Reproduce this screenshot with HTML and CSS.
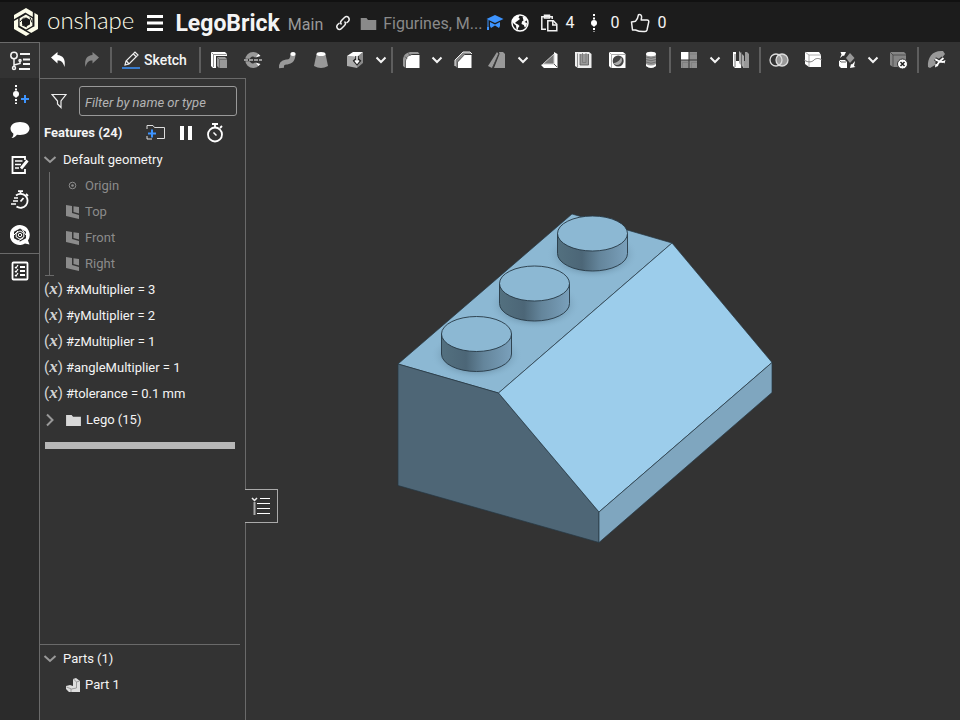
FILE: index.html
```html
<!DOCTYPE html>
<html lang="en">
<head>
<meta charset="utf-8">
<title>LegoBrick | Main</title>
<link rel="stylesheet" href="styles.css">
</head>
<body>
<svg class="defs" aria-hidden="true">
  <symbol id="chevron" viewBox="0 0 12 12"><path d="M1.500 3.500l4.500 4.500 4.500-4.500" fill="none" stroke="currentColor" stroke-width="2"/></symbol>
  <symbol id="plane" viewBox="0 0 14 14"><path d="M0 0l6 1v7l7 2v4L0 11z"/><path d="M7.500 1.200l5.500.8v6.500L7.500 7z"/></symbol>
  <symbol id="folder" viewBox="0 0 16 14"><path d="M0 1h6l1.500 2H16v10H0z"/></symbol>
</svg>

<header class="topbar">
  <a class="brand" href="#" aria-label="onshape home">
    <svg width="24" height="28" viewBox="0 0 24 28">
      <path d="M12 0L24 7v14L12 28 0 21V7z" fill="#fdfdea"/>
      <path d="M12 5l7.800 4.500v9L12 23l-7.800-4.500v-9z" fill="#1c1c1c"/>
      <g stroke="#1c1c1c" stroke-width="1.600"><path id="slit" d="M12 5.200L-1 12.700"/><use href="#slit" transform="rotate(120 12 14)"/><use href="#slit" transform="rotate(240 12 14)"/></g>
      <path d="M12 8l5.200 3v6L12 20l-5.200-3v-6z" fill="none" stroke="#fdfdea" stroke-width="2.400"/>
      <path d="M6 14l4-4.500M16 9.500l2 5M13 19l-5-2" stroke="#1c1c1c"/>
    </svg>
    <span>onshape</span>
  </a>
  <button class="menu" type="button" aria-label="Menu"><svg width="16" height="16" viewBox="0 0 16 16"><path d="M0 1.500h16M0 8h16M0 14.500h16" stroke="#fff" stroke-width="3"/></svg></button>
  <h1>LegoBrick</h1>
  <span class="workspace">Main</span>
  <button class="share" type="button" aria-label="Copy link"><svg width="16" height="16" viewBox="0 0 16 16" fill="none" stroke="#eee" stroke-width="1.500"><path d="M6.500 9.500C5 8 5.500 6.500 6.500 5.500l3-3c1.300-1.300 3-1.300 4 0s1 2.500 0 3.700L11.500 8"/><path d="M9.500 6.500c1.500 1.500 1 3 0 4l-3 3c-1.300 1.300-3 1.300-4 0s-1-2.500 0-3.700L4.500 8"/></svg></button>
  <a class="location" href="#"><svg width="17" height="14" viewBox="0 0 16 14" fill="#8a8a8a"><use href="#folder"/></svg>Figurines, M...</a>
  <svg class="edu" width="18" height="16" viewBox="0 0 18 16" fill="#3d94ff"><path d="M9 0l8.500 4L9 8 .5 4zM4 7l5 2.400L14 7v4l-1 2-4-2.500L5 13l-1-2z"/><path d="M2 5v8" stroke="#3d94ff"/><path d="M1 15v-3h2v3z"/></svg>
  <svg class="globe" width="18" height="18" viewBox="0 0 18 18"><circle cx="9" cy="9" r="8" fill="none" stroke="#fff" stroke-width="1.500"/><path d="M2 4.500L6 1.500l2.500.5-1 1.500L9 5 7 6.500 5 8 4 9l3 1.500 1.500 1.500L7 14v2l-1.500-1L5 11.500 2.500 9.500 1 7zM11.500 2.500L14 3l2.300 3-1.300 1-1.500 1L16 9l-.5 3-1.700 1.500-1-2.500-2.300-1 .5-2.500 1.500-1-.5-2z" fill="#fff"/></svg>
  <button class="stat" type="button" aria-label="Copies"><svg width="18" height="18" viewBox="0 0 18 18" fill="none" stroke="#f2f2f2" stroke-width="1.500"><path d="M6 15.200H1.800V2.800h10.400V5"/><path d="M4.500 4V1.200h5V4z"/><path d="M7.800 6.800h5.500l3.500 3.500v6.500h-9z"/><path d="M12.800 7v4h4"/></svg>4</button>
  <button class="stat" type="button" aria-label="Versions"><svg width="18" height="18" viewBox="0 0 18 18"><path d="M9 0v18" stroke="#fff" stroke-width="2" stroke-dasharray="2 1.500"/><circle cx="9" cy="9" r="3" fill="#fff"/></svg>0</button>
  <button class="stat" type="button" aria-label="Likes"><svg width="20" height="20" viewBox="0 0 20 20" fill="none" stroke="#f2f2f2" stroke-width="1.500" stroke-linejoin="round"><path d="M1.500 9l4-.8c2-1.800 2.500-3.200 3-6.500 2-.8 3.300.8 3.100 2.500L11.200 7H17c1.500 0 2 1 1.700 2.200L17 17c-.3 1-.8 1.500-2 1.500-4 .3-7-.3-9.500-1.500H2.500z"/></svg>0</button>
</header>

<div class="workarea">
  <nav class="rail" aria-label="Side panels">
    <button class="active" type="button" aria-label="Feature list"><svg width="22" height="20" viewBox="0 0 22 20" fill="none" stroke="#f4f4f4" stroke-width="1.500"><circle cx="5" cy="4.500" r="3.200"/><path d="M5 8v8M5 14l6-1.500V10"/><circle cx="5" cy="17" r="1.500"/><circle cx="11" cy="9.500" r="1"/><path d="M11 3h10M14 8.500h7M14 13h7M10 18h11" stroke-width="2"/></svg></button>
    <button type="button" aria-label="Versions and history"><svg width="20" height="20" viewBox="0 0 20 20"><path d="M6 0v19" stroke="#fff" stroke-width="2" stroke-dasharray="2 1.500"/><circle cx="6" cy="9" r="3" fill="#fff"/><path d="M11 14h8M15 10v8" stroke="#3d94ff" stroke-width="2"/></svg></button>
    <button type="button" aria-label="Comments"><svg width="20" height="18" viewBox="0 0 20 18"><path d="M10 1c5.500 0 9.500 2.800 9.500 6.500S15.500 14 10 14l-3-.3C5.500 15.500 4 17 1.500 17c1.500-1.300 2-2.500 1.800-4.500C1.500 11.300.5 9.500.5 7.500.5 3.800 4.500 1 10 1z" fill="#fff"/></svg></button>
    <button type="button" aria-label="Notes"><svg width="18" height="20" viewBox="0 0 18 20" fill="none" stroke="#fff" stroke-width="1.800"><path d="M14 5V2H1.500v16H14v-4"/><path d="M4 6h7.500M4 9.500h6M4 13h4" stroke-width="1.500"/><path d="M16.500 5.500l-6.500 8" stroke-width="2.800"/></svg></button>
    <button type="button" aria-label="Performance"><svg width="20" height="20" viewBox="0 0 20 20" fill="none" stroke="#fff" stroke-width="1.800"><path d="M6 5.500a7 7 0 1 1 .5 11"/><path d="M8 1.200h5M10.500 1v3M16 4l2 2M10.500 11.500l3-3.500"/><path d="M4 8h4M3 11h5M1 14h5" stroke-width="1.300"/></svg></button>
    <button type="button" aria-label="Help"><svg width="20" height="20" viewBox="0 0 20 20"><path d="M10 0a10 10 0 0 1 8 15.500l1.500 4-4.500-1A10 10 0 1 1 10 0z" fill="#fff"/><path d="M10 3.500l6 3.300v6.500l-6 3.300-6-3.300V6.800z" fill="#2b2b2b"/><path d="M10 6l3.800 2v4L10 14.200 6.200 12V8z" fill="none" stroke="#fff"/><circle cx="10" cy="10" r="1.700" fill="none" stroke="#fff"/><path d="M4 10l4-4M12 4.500L16 10M8 16l5-3" stroke="#fff"/></svg></button>
    <button class="split" type="button" aria-label="Checklist"><svg width="18" height="20" viewBox="0 0 18 20" fill="none" stroke="#fff" stroke-width="1.800"><rect x="1.500" y="1.500" width="15" height="17" rx="1"/><path d="M9 6h5M9 10h5M9 14h5"/><path d="M4 6l1 1 2-3M4 10l1 1 2-3M4 14l1 1 2-3" stroke-width="1.200"/></svg></button>
  </nav>

  <main class="studio">
    <div class="toolbar" role="toolbar" aria-label="Modeling tools">
      <button class="tool" type="button" aria-label="Undo"><svg viewBox="0 0 20 20"><path d="M3 7.500L9.500 2v3c5 .3 8.500 4 7 12-1.500-5-3-6.500-7-6.500v3z" fill="#fff"/></svg></button>
      <button class="tool" type="button" aria-label="Redo"><svg viewBox="0 0 20 20"><path d="M17 7.500L10.500 2v3c-5 .3-8.500 4-7 12 1.500-5 3-6.500 7-6.500v3z" fill="#858585"/></svg></button>
      <span class="sep"></span>
      <button class="sketch" type="button"><svg width="18" height="18" viewBox="0 0 18 18"><path d="M3 14l1-4 9-9 3 3-9 9zM3.500 14l3-1M11.500 3l3 3M4.500 10l2.500 3" fill="none" stroke="#eee" stroke-width="1.200"/><path d="M0 17h18" stroke="#3d94ff" stroke-width="1.500"/></svg>Sketch</button>
      <span class="sep"></span>
      <button class="tool" type="button" aria-label="Extrude"><svg viewBox="0 0 20 20"><path d="M2 2h14l2 2v2H7v12H4l-2-2z" fill="#fff"/><path d="M4.500 17V4.500h13M2.500 2.500l2 2" fill="none" stroke="#777" stroke-width=".8"/><path d="M8 7h8l2 2v9h-8l-2-2z" fill="#999"/><path d="M8 7l2.500 2.500V18M10.500 9.500H18" fill="none" stroke="#666" stroke-width=".8"/></svg></button>
      <button class="tool" type="button" aria-label="Revolve"><svg viewBox="0 0 20 20"><path d="M16 4.500A8 8 0 1 0 16 15.500L12 12.500A3.300 3.300 0 1 1 12 7.500z" fill="#999"/><path d="M12.500 7.500l3-3.500 2 2zM12.500 12.500l3 3.500 2-2z" fill="#fff"/><path d="M1 10h18" stroke="#333" stroke-width="2.500"/><path d="M1 10h18" stroke="#fff" stroke-dasharray="4 1" stroke-width="1.200"/></svg></button>
      <button class="tool" type="button" aria-label="Sweep"><svg viewBox="0 0 20 20"><path d="M4.500 18c-.5-5 2-5.500 5-6s6-.5 6.500-7.500" fill="none" stroke="#999" stroke-width="5"/><ellipse cx="16" cy="4" rx="2.700" ry="2" fill="#fff"/></svg></button>
      <button class="tool" type="button" aria-label="Loft"><svg viewBox="0 0 20 20"><path d="M5.500 4h9L17 16q-7 4-14 0z" fill="#999"/><ellipse cx="10" cy="4" rx="4.500" ry="2" fill="#fff"/></svg></button>
      <button class="tool" type="button" aria-label="Thicken"><svg viewBox="0 0 20 20"><path d="M2 6l10 1v11L2 16z" fill="#aaa"/><path d="M12 7l6-5v11l-6 5z" fill="#8a8a8a"/><path d="M2 6l6-4h10l-6 5z" fill="#fff"/><path d="M12 6v5m-3-1.500l3 3.500 3-3.500" stroke="#222" stroke-width="3.500" fill="none"/><path d="M12 6v6m-2-1.500l2 2.500 2-2.500" stroke="#fff" stroke-width="1.500" fill="none"/></svg></button>
      <button class="drop" type="button" aria-label="More solids"><svg width="12" height="12"><use href="#chevron"/></svg></button>
      <span class="sep"></span>
      <button class="tool" type="button" aria-label="Fillet"><svg viewBox="0 0 20 20"><path d="M2 16V9c1-5 4-7 9-7h6l1.500 2H12c-4 .5-7 3-7.500 7v7z" fill="#999"/><path d="M5 18v-7c.5-4 3-6 7-6h6.500v13z" fill="#fff"/><path d="M4 6.500l2 2M7.500 3.500L9 5.500" stroke="#444" stroke-width=".8"/></svg></button>
      <button class="drop" type="button" aria-label="More fillets"><svg width="12" height="12"><use href="#chevron"/></svg></button>
      <button class="tool" type="button" aria-label="Chamfer"><svg viewBox="0 0 20 20"><path d="M2 16v-6l8-8h7l1.500 2H12l-7.500 7.500V18z" fill="#888"/><path d="M5 18v-6l6.500-7h7v13z" fill="#fff"/><path d="M2 16v-6l8-8h7l2 2" fill="none" stroke="#eee"/></svg></button>
      <button class="tool" type="button" aria-label="Draft"><svg viewBox="0 0 20 20"><path d="M12 2h4l2 2v14H7L12.500 4z" fill="#999"/><path d="M10 2L1 16l4 2 6.500-14z" fill="#999"/><path d="M12 3L5.500 18" stroke="#444" stroke-width=".8"/></svg></button>
      <button class="drop" type="button" aria-label="More drafts"><svg width="12" height="12"><use href="#chevron"/></svg></button>
      <button class="tool" type="button" aria-label="Rib"><svg viewBox="0 0 20 20"><path d="M15 2l3.500 2v14H5l-3-3 2-1h11z" fill="#fff"/><path d="M15 4v10H4z" fill="#777" stroke="#ccc"/><path d="M15 14l3 3" stroke="#333" stroke-width=".8"/></svg></button>
      <button class="tool" type="button" aria-label="Shell"><svg viewBox="0 0 20 20"><path d="M2 2h14l2.500 2v14H5l-3-2z" fill="#eee"/><path d="M7 4v11h8.500V4" fill="#999" stroke="#555" stroke-width=".8"/><path d="M4.500 3.500V17M9.500 3v9.500H13V3" fill="none" stroke="#777" stroke-width=".8"/></svg></button>
      <button class="tool" type="button" aria-label="Hole"><svg viewBox="0 0 20 20"><path d="M2 2h14l2.500 2v14H4l-2-2z" fill="#fff"/><path d="M2 2l2.500 2.500V18M4.500 4.500H18" fill="none" stroke="#999" stroke-width=".8"/><circle cx="11.200" cy="11" r="5.500" fill="#444"/><path d="M14 7a5 5 0 0 1-8 6c3 0 7-2 8-6z" fill="#aaa"/></svg></button>
      <button class="tool" type="button" aria-label="Thread"><svg viewBox="0 0 20 20"><path d="M5 4v12q5 4 10 0V4z" fill="#999"/><path d="M5 7q5 2.500 10 0M5 9.500q5 2.500 10 0M5 12q5 2.500 10 0" fill="none" stroke="#666" stroke-width=".8"/><ellipse cx="10" cy="4" rx="5" ry="2.200" fill="#fff"/><path d="M5 14v2q5 4 10 0v-2q-5 3-10 0z" fill="#fff"/></svg></button>
      <span class="sep"></span>
      <button class="tool" type="button" aria-label="Pattern"><svg viewBox="0 0 20 20"><path d="M10.500 2H18v7.500h-7.500zM2 10.500h7.500V18H2zM10.500 10.500H18V18h-7.500z" fill="#8f8f8f"/><path d="M2 2h7.500v7.500H2z" fill="#fff"/><path d="M11 4h7M3.500 18v-5.500h6M12.500 18v-5.500H18" fill="none" stroke="#777" stroke-width=".6"/></svg></button>
      <button class="drop" type="button" aria-label="More patterns"><svg width="12" height="12"><use href="#chevron"/></svg></button>
      <button class="tool" type="button" aria-label="Mirror"><svg viewBox="0 0 20 20"><path d="M2 2h3v9h3V5l2 1v12H4l-2-2z" fill="#fff"/><path d="M18 4l-2-2h-2v9h-2v7h6z" fill="#999"/><path d="M8 1l5 5v12l-5-5z" fill="#aaa"/><path d="M4 4v13M10.500 2v16" stroke="#555" stroke-width=".8"/></svg></button>
      <span class="sep"></span>
      <button class="tool" type="button" aria-label="Boolean"><svg viewBox="0 0 20 20"><circle cx="13" cy="10" r="6" fill="#999"/><circle cx="7" cy="10" r="6" fill="none" stroke="#ddd" stroke-width="1.300"/><circle cx="13" cy="10" r="6" fill="none" stroke="#ddd" stroke-width="1.300"/></svg></button>
      <button class="tool" type="button" aria-label="Split"><svg viewBox="0 0 20 20"><path d="M2 2h14l2 3v12H6l-4-3z" fill="#fff"/><path d="M2 2l4 3h12M6 5v12" fill="none" stroke="#999" stroke-width=".8"/><path d="M1 10c5 3 8 2 10 0s5-2 8 0" fill="none" stroke="#777"/></svg></button>
      <button class="tool" type="button" aria-label="Transform"><svg viewBox="0 0 20 20"><path d="M2 10h6l2 2v6H4l-2-2z" fill="#fff"/><path d="M2 10l2 2h5" fill="none" stroke="#444" stroke-width=".8"/><path d="M13 3l4.500 5-4.500 5-4-5z" fill="#999"/><path d="M3 8l1.500-3.500L3.500 2H9L7 6 6 5.500zM18 11l-1 5 1.500 1-5.500 1 1-4 1 .5z" fill="#fff"/></svg></button>
      <button class="drop" type="button" aria-label="More transforms"><svg width="12" height="12"><use href="#chevron"/></svg></button>
      <button class="tool" type="button" aria-label="Delete part"><svg viewBox="0 0 20 20"><path d="M1 2h14l2 2v13H4l-3-2z" fill="#858585"/><path d="M1 2l3 3h13M4 5v12" fill="none" stroke="#444" stroke-width=".8"/><circle cx="13.500" cy="14" r="5" fill="#fff" stroke="#333"/><path d="M11.500 12l4 4m0-4l-4 4" stroke="#222" stroke-width="1.500"/></svg></button>
      <span class="sep"></span>
      <button class="tool" type="button" aria-label="Modify fillet"><svg viewBox="0 0 20 20"><path d="M1 17C0 7 6 0 16 1l2 3-4 5c-4 0-6 2-6 6l-5 3z" fill="#999"/><path d="M8 9l4 2 4-3M10 16l3-5 5 1" fill="none" stroke="#333" stroke-width="4"/><path d="M7.500 8.500l3 .5-1 2zM18.500 10l-1 3.500-2.500-2zM8 17.500l.5-4 3 2z" fill="#fff"/><path d="M8.500 9.500l4 2 4-3.500M9.500 16l3-4.500 4 .5" fill="none" stroke="#fff" stroke-width="1.800"/></svg></button>
    </div>

    <div class="content">
      <aside class="panel">
        <div class="filter">
          <button type="button" aria-label="Filter options"><svg width="16" height="16" viewBox="0 0 16 16"><path d="M1 1.500h14L10 8v6.500L6.500 11V8z" fill="none" stroke="#eee" stroke-width="1.200"/></svg></button>
          <input type="text" placeholder="Filter by name or type" aria-label="Filter by name or type">
        </div>
        <div class="heading">
          <h2>Features (24)</h2>
          <button type="button" aria-label="Add folder"><svg width="20" height="18" viewBox="0 0 20 18"><path d="M1 5V1.500h6l1.500 2H18.500v11H11M1 12v3h5" fill="none" stroke="#ddd"/><path d="M2 9.500h8M6 5.500v8" stroke="#3d94ff" stroke-width="2"/></svg></button>
          <button type="button" aria-label="Pause"><svg width="14" height="14" viewBox="0 0 14 14"><path d="M1 0h4v14H1zM9 0h4v14H9z" fill="#fff"/></svg></button>
          <button type="button" aria-label="Timing"><svg width="18" height="20" viewBox="0 0 18 20" fill="none" stroke="#fff" stroke-width="1.800"><circle cx="9" cy="11.500" r="7"/><path d="M6 1h6M9 1v3M14 5l2-2"/><path d="M7.500 9.500l3 3" stroke-width="1.500"/></svg></button>
        </div>
        <ul class="tree">
          <li><div class="row"><svg class="caret" width="16" height="12" viewBox="0 0 16 12"><path d="M2.500 3l5.500 5 5.500-5"/></svg>Default geometry</div>
            <ul class="group">
              <li class="row"><svg width="14" height="14" viewBox="0 0 14 14"><circle cx="6.500" cy="6.500" r="3.300" fill="none" stroke="#8b8b8b"/><circle cx="6.500" cy="6.500" r="1.300"/></svg>Origin</li>
              <li class="row"><svg width="14" height="14"><use href="#plane"/></svg>Top</li>
              <li class="row"><svg width="14" height="14"><use href="#plane"/></svg>Front</li>
              <li class="row"><svg width="14" height="14"><use href="#plane"/></svg>Right</li>
            </ul>
          </li>
          <li class="row"><span class="var">(<i>x</i>)</span>#xMultiplier = 3</li>
          <li class="row"><span class="var">(<i>x</i>)</span>#yMultiplier = 2</li>
          <li class="row"><span class="var">(<i>x</i>)</span>#zMultiplier = 1</li>
          <li class="row"><span class="var">(<i>x</i>)</span>#angleMultiplier = 1</li>
          <li class="row"><span class="var">(<i>x</i>)</span>#tolerance = 0.1 mm</li>
          <li class="row folder"><svg class="caret" width="12" height="16" viewBox="0 0 12 16"><path d="M3 2.500L8.500 8 3 13.500"/></svg><svg width="15" height="13" viewBox="0 0 16 14" fill="#d8d8d8"><use href="#folder"/></svg>Lego (15)</li>
        </ul>
        <div class="rollback"></div>
        <section class="parts">
          <div class="row"><svg class="caret" width="16" height="12" viewBox="0 0 16 12"><path d="M2.500 3l5.500 5 5.500-5"/></svg>Parts (1)</div>
          <div class="row part"><svg width="16" height="16" viewBox="0 0 16 16"><path d="M8 2l3-1 4 3v11H4l-3-3V9l4-1 3 1z" fill="#ddd"/><path d="M8.500 2l3 3v6l-5 1-5-2M11.500 5l3-1M6 12v3" fill="none" stroke="#888" stroke-width=".8"/></svg>Part 1</div>
        </section>
      </aside>

      <section class="viewport" aria-label="Model view">
        <button class="flyout" type="button" aria-label="Show configuration panel"><svg width="20" height="18" viewBox="0 0 20 18"><path d="M1 1l2.500 2.500L6 1" fill="none" stroke="#eee" stroke-width="1.500"/><path d="M3.500 5v13" stroke="#aaa" stroke-width="2"/><path d="M9 1.500h10M6 6.500h13M6 11.500h13M6 16.500h13" stroke="#fff"/></svg></button>
        <svg class="model" viewBox="246 78 714 642" role="img" aria-label="LegoBrick model">
          <defs>
            <linearGradient id="side"><stop offset="0" stop-color="#53707f"/><stop offset=".35" stop-color="#4c6677"/><stop offset=".6" stop-color="#64859b"/><stop offset="1" stop-color="#7aa0bb"/></linearGradient>
            <radialGradient id="shade"><stop offset=".7" stop-color="#6d93ab" stop-opacity=".6"/><stop offset="1" stop-color="#8cb8d3" stop-opacity="0"/></radialGradient>
            <g id="stud" stroke-width=".9">
              <ellipse cx="0" cy="21" rx="46" ry="25" fill="url(#shade)"/>
              <path d="M-35 0v20a35 17.500 0 0 0 70 0V0z" fill="url(#side)" stroke="#263844"/>
              <ellipse rx="35" ry="17.500" fill="#8cb8d3" stroke="#263844"/>
            </g>
          </defs>
          <g stroke-linejoin="round" stroke="#263844" stroke-width=".7">
            <path d="M398 364L572 214l100 29L498.500 393z" fill="#8cb8d3"/>
            <path d="M398 364l100.500 29L599 512v30.500L398 485.500z" fill="#4e6676"/>
            <path d="M498.500 393L672 243l100 119.500L599 512z" fill="#9ccdeb"/>
            <path d="M599 512l173-149.500v30L599 542.500z" fill="#7fa6bf"/>
          </g>
          <use href="#stud" x="592.500" y="233.500"/>
          <use href="#stud" x="534.500" y="283.500"/>
          <use href="#stud" x="476.500" y="334"/>
        </svg>
      </section>
    </div>
  </main>
</div>
</body>
</html>
```

FILE: styles.css
```css
* { box-sizing: border-box; }

body {
  margin: 0;
  height: 100vh;
  display: flex;
  flex-direction: column;
  overflow: hidden;
  background: #333;
  color: #f4f4f4;
  font: 14px/20px Roboto, "Liberation Sans", sans-serif;
}

button {
  display: flex;
  align-items: center;
  justify-content: center;
  padding: 0;
  border: 0;
  background: none;
  color: inherit;
  font: inherit;
}

a { color: inherit; text-decoration: none; }
ul { margin: 0; padding: 0; list-style: none; }
svg { flex: none; }
.defs { position: absolute; width: 0; height: 0; }

.topbar {
  display: flex;
  align-items: center;
  height: 42px;
  flex: none;
  padding: 2px 0 0 14px;
  border-top: 2px solid #111;
  background: #1c1c1c;
  white-space: nowrap;
}
.brand {
  display: flex;
  align-items: center;
  gap: 9px;
  padding-bottom: 2px;
  color: #fdfdea;
  font: 300 24px/28px Lato, sans-serif;
}
.brand span { padding-bottom: 4px; }
.menu { margin-left: 13px; }
h1 { margin: 0 0 0 12px; padding-top: 2px; font-size: 23px; line-height: 28px; font-weight: 700; }
.workspace { margin-left: 8px; padding-top: 4px; color: #999; font-size: 16px; line-height: 24px; }
.share { margin-left: 12px; }
.location {
  display: flex;
  align-items: center;
  gap: 6px;
  margin-left: 9px;
  padding-top: 2px;
  color: #8a8a8a;
  font-size: 16px;
  line-height: 24px;
}
.edu { margin-left: 4px; }
.globe { margin-left: 7px; }
.stat { gap: 7px; margin-left: 11px; font-size: 16px; }

.workarea { display: flex; flex: 1; min-height: 0; }

.rail {
  display: flex;
  flex-direction: column;
  flex: none;
  width: 40px;
  border-right: 1px solid #6a6a6a;
  background: #2b2b2b;
}
.rail button { height: 35px; padding-bottom: 2px; }
.rail .active {
  height: 36px;
  padding: 0;
  border-top: 1px solid #6a6a6a;
  background: #333;
}
.rail .split { padding: 0; border-top: 1px solid #6a6a6a; }

.studio { display: flex; flex-direction: column; flex: 1; min-width: 0; }

.toolbar { display: flex; align-items: center; height: 36px; flex: none; padding-left: 1px; }
.tool { flex: none; width: 34px; height: 34px; }
.tool svg { width: 20px; height: 20px; }
.drop { flex: none; width: 18px; height: 34px; }
.sep { flex: none; width: 2px; height: 26px; margin: 0 1px; background: #5e5e5e; }
.sketch { flex: none; gap: 4px; padding: 0 11px 0 9px; font-weight: 500; }

.content { display: flex; flex: 1; min-height: 0; }

.panel {
  display: flex;
  flex-direction: column;
  flex: none;
  width: 206px;
  border: solid #6a6a6a;
  border-width: 1px 1px 0 0;
}
.filter { display: flex; gap: 12px; padding: 7px 8px 0 11px; }
.filter input {
  flex: 1;
  min-width: 0;
  height: 30px;
  padding: 2px 5px 0;
  border: 1px solid #999;
  border-radius: 3px;
  background: none;
  color: #fff;
  font: italic 13px/20px Roboto, sans-serif;
}
.filter input::placeholder { color: #b4b4b4; }

.heading { display: flex; align-items: center; gap: 13px; height: 30px; padding: 3px 21px 0 4px; }
h2 { flex: 1; margin: 0; font-size: 13px; line-height: 20px; font-weight: 700; white-space: nowrap; }

.row { display: flex; align-items: center; height: 26px; padding: 2px 0 0 4px; font-size: 13px; }
.caret { margin: 0 5px 0 -2px; fill: none; stroke: #999; stroke-width: 2; }
.group {
  position: relative;
  margin-left: 9px;
  border-left: 1px solid #6a6a6a;
  color: #8b8b8b;
  fill: #8b8b8b;
}
.group::after {
  content: "";
  position: absolute;
  left: -5px;
  bottom: 0;
  width: 9px;
  border-bottom: 1px solid #6a6a6a;
}
.group .row { gap: 5px; padding-left: 16px; }
.var { width: 22px; font-size: 15px; line-height: 20px; padding-bottom: 2px; white-space: nowrap; color: #d4d4d4; }
.var i { font: italic 700 17px/16px "Liberation Serif", serif; }
.folder .caret { margin: 0 10px 0 0; }
.folder svg + svg { margin-right: 5px; }
.rollback { height: 7px; margin: 10px 10px 0 5px; background: #b8b8b8; }

.parts { margin: auto 5px 0 0; padding-bottom: 23px; border-top: 1px solid #6a6a6a; }
.part { gap: 4px; padding-left: 25px; }

.viewport { position: relative; flex: 1; min-width: 0; }
.model { display: block; width: 100%; height: 100%; }
.flyout {
  position: absolute;
  top: 64%;
  left: -1px;
  width: 33px;
  height: 34px;
  border: 1px solid #aaa;
  border-left: 0;
  background: #333;
}
```
